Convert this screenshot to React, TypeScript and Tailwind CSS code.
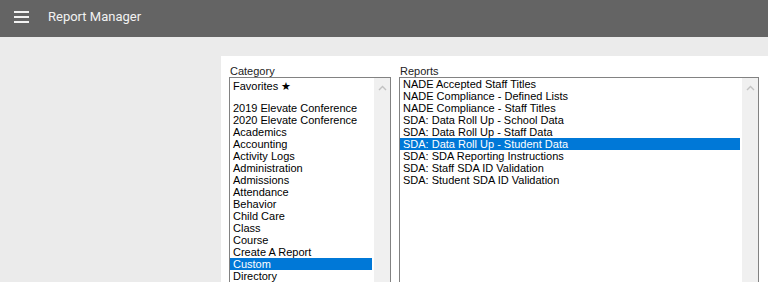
import React from "react";

const categories = [
  "Favorites ★",
  "",
  "2019 Elevate Conference",
  "2020 Elevate Conference",
  "Academics",
  "Accounting",
  "Activity Logs",
  "Administration",
  "Admissions",
  "Attendance",
  "Behavior",
  "Child Care",
  "Class",
  "Course",
  "Create A Report",
  "Custom",
  "Directory",
  "Discipline",
];

const reports = [
  "NADE Accepted Staff Titles",
  "NADE Compliance - Defined Lists",
  "NADE Compliance - Staff Titles",
  "SDA: Data Roll Up - School Data",
  "SDA: Data Roll Up - Staff Data",
  "SDA: Data Roll Up - Student Data",
  "SDA: SDA Reporting Instructions",
  "SDA: Staff SDA ID Validation",
  "SDA: Student SDA ID Validation",
];

function Scrollbar() {
  return (
    <div className="w-4 shrink-0 bg-[#f0f0f0] flex flex-col items-center pt-[7px]">
      <svg width="9" height="6" viewBox="0 0 9 6" fill="none">
        <path d="M1 5 L4.5 1.5 L8 5" stroke="#c2c2c2" strokeWidth="1.4" />
      </svg>
    </div>
  );
}

function ListBox({
  items,
  selected,
  width,
}: {
  items: string[];
  selected: string;
  width: string;
}) {
  return (
    <div className={`${width} h-[220px] border border-[#828282] bg-white flex`}>
      <ul className="flex-1 pr-[2px]">
        {items.map((item, i) => (
          <li
            key={i}
            className={`leading-3 pl-[3px] whitespace-nowrap ${
              item.startsWith("Favorites")
                ? "h-[14px] pt-[2px]"
                : item === ""
                  ? "h-[10px]"
                  : "h-3"
            } ${item === selected ? "bg-[#0078d7] text-white" : "text-black"}`}
          >
            {item}
          </li>
        ))}
      </ul>
      <Scrollbar />
    </div>
  );
}

export default function App() {
  return (
    <div className="min-h-screen bg-[#ebebeb] overflow-hidden font-['Liberation_Sans',Arial,sans-serif]">
      <header className="h-[37px] bg-[#646464] flex items-center">
        <div className="ml-[14px] w-[15px] flex flex-col gap-[3px] -mt-[3px]">
          <span className="h-[2px] bg-[#f2f2f2]" />
          <span className="h-[2px] bg-[#f2f2f2]" />
          <span className="h-[2px] bg-[#f2f2f2]" />
        </div>
        <h1 className="ml-[19px] -mt-[4px] text-[13px] text-[#f2f2f2] font-['Roboto',sans-serif]">
          Report Manager
        </h1>
      </header>
      <main className="ml-[221px] mt-[19px] bg-white h-[240px] pl-2 pt-[9px] flex gap-[8px] text-[11px]">
        <section>
          <h2 className="h-3 leading-3 ml-px text-[#222]">Category</h2>
          <ListBox items={categories} selected="Custom" width="w-[162px]" />
        </section>
        <section>
          <h2 className="h-3 leading-3 ml-px text-[#222]">Reports</h2>
          <ListBox
            items={reports}
            selected="SDA: Data Roll Up - Student Data"
            width="w-[360px]"
          />
        </section>
      </main>
    </div>
  );
}
